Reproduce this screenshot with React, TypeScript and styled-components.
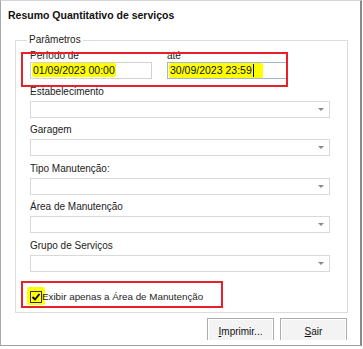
import styled, { createGlobalStyle } from "styled-components";

const GlobalStyle = createGlobalStyle`
  html, body {
    margin: 0;
    padding: 0;
    background: #ffffff;
  }

  body {
    font-family: "Liberation Sans", Arial, sans-serif;
    font-size: 10px;
    color: #1e1e1e;
  }
`;

const filterFields = [
  "Estabelecimento",
  "Garagem",
  "Tipo Manutenção:",
  "Área de Manutenção",
  "Grupo de Serviços",
];

export default function App() {
  return (
    <>
      <GlobalStyle />
      <Window>
        <Title>Resumo Quantitativo de serviços</Title>
        <GroupBox>
          <Legend>Parâmetros</Legend>
          <Marked $top={3.5} $left={-9} $width={267} $height={35}>
            <DateRow>
              <Field $gap={0} $width={122}>
                <Label>Período de</Label>
                <TextBox>
                  <Marker>01/09/2023 00:00</Marker>
                </TextBox>
              </Field>
              <Field $gap={0} $width={120}>
                <Label>até</Label>
                <TextBox $focused>
                  <Marker $extra={8}>
                    30/09/2023 23:59
                    <Caret />
                  </Marker>
                </TextBox>
              </Field>
            </DateRow>
          </Marked>
          <FieldList>
            {filterFields.map((name) => (
              <Field key={name} $gap={3}>
                <Label>{name}</Label>
                <ComboBox>
                  <Arrow />
                </ComboBox>
              </Field>
            ))}
          </FieldList>
          <CheckArea $top={-6} $left={-6} $width={202} $height={27}>
            <CheckRow>
              <CheckMarker>
                <CheckBox>
                  <svg width="10" height="10" viewBox="0 0 10 10">
                    <path
                      d="M1.5 5 L4 7.5 L8.5 2"
                      fill="none"
                      stroke="#000"
                      strokeWidth="1.8"
                    />
                  </svg>
                </CheckBox>
              </CheckMarker>
              <CheckLabel>Exibir apenas a Área de Manutenção</CheckLabel>
            </CheckRow>
          </CheckArea>
        </GroupBox>
        <ButtonBar>
          <Button>
            <u>I</u>mprimir...
          </Button>
          <Button>
            <u>S</u>air
          </Button>
        </ButtonBar>
      </Window>
    </>
  );
}

const Window = styled.div`
  width: 362px;
  height: 346px;
  box-sizing: border-box;
  border-left: 1px solid #a8a8a8;
  border-top: 1px solid #d6d6d6;
  border-right: 2px solid #8a8a8a;
  border-bottom: 1px solid #a0a0a0;
  background: #ffffff;
  overflow: hidden;
`;

const Title = styled.div`
  padding: 8px 0 0 7px;
  line-height: 13px;
  font-size: 10.5px;
  font-weight: bold;
  color: #111;
`;

const GroupBox = styled.fieldset`
  margin: 11px 12px 0 14px;
  padding: 1.5px 17px 7px 14px;
  border: 1px solid #dcdcdc;
  min-width: 0;
`;

const Legend = styled.legend`
  margin-left: -3px;
  padding: 0 2px;
  line-height: 14px;
  color: #222;
`;

const Marked = styled.div<{
  $top: number;
  $left: number;
  $width: number;
  $height: number;
}>`
  position: relative;

  &::after {
    content: "";
    position: absolute;
    top: ${(p) => p.$top}px;
    left: ${(p) => p.$left}px;
    width: ${(p) => p.$width}px;
    height: ${(p) => p.$height}px;
    box-sizing: border-box;
    border: 2px solid #e8202a;
    pointer-events: none;
  }
`;

const DateRow = styled.div`
  display: flex;
  gap: 15px;
`;

const Field = styled.div<{ $gap: number; $width?: number }>`
  display: flex;
  flex-direction: column;
  gap: ${(p) => p.$gap}px;
  width: ${(p) => (p.$width ? `${p.$width}px` : "auto")};
`;

const Label = styled.div`
  line-height: 13px;
  color: #222;
  white-space: nowrap;
`;

const TextBox = styled.div<{ $focused?: boolean }>`
  height: 17px;
  box-sizing: border-box;
  border: 1px solid ${(p) => (p.$focused ? "#9fb6d6" : "#d2d2d2")};
  padding: 0 0 0 1px;
  display: flex;
  align-items: center;
  font-size: 10.5px;
  color: #111;
`;

const Marker = styled.span<{ $extra?: number }>`
  display: inline-flex;
  align-items: center;
  background: #ffff00;
  border-radius: 2px;
  padding: 1px ${(p) => 1 + (p.$extra ?? 0)}px 1px 1px;
  line-height: 12px;
`;

const Caret = styled.span`
  display: inline-block;
  width: 1px;
  height: 13px;
  margin-left: 1px;
  background: #000;
`;

const FieldList = styled.div`
  display: flex;
  flex-direction: column;
  gap: 5.5px;
  margin-top: 6px;
`;

const ComboBox = styled.div`
  height: 17px;
  box-sizing: border-box;
  border: 1px solid #d9d9d9;
  background: #ffffff;
  display: flex;
  align-items: center;
  justify-content: flex-end;
  padding-right: 5px;
`;

const Arrow = styled.span`
  width: 0;
  height: 0;
  border-left: 3px solid transparent;
  border-right: 3px solid transparent;
  border-top: 3px solid #8a8a8a;
`;

const CheckArea = styled(Marked)`
  margin: 15px 0 0 -3px;
`;

const CheckRow = styled.div`
  display: flex;
  align-items: center;
`;

const CheckMarker = styled.span`
  display: flex;
  padding: 4px 3px 2px 3px;
  background: #ffff00;
  border-radius: 2px;
`;

const CheckBox = styled.span`
  width: 12px;
  height: 12px;
  box-sizing: border-box;
  border: 1px solid #333;
  display: flex;
  align-items: center;
  justify-content: center;
`;

const CheckLabel = styled.span`
  margin-left: -3px;
  margin-top: 1px;
  line-height: 13px;
  font-size: 9.8px;
  color: #1e1e1e;
  white-space: nowrap;
`;

const ButtonBar = styled.div`
  display: flex;
  justify-content: flex-end;
  gap: 6px;
  margin-top: 5px;
  padding-right: 13px;
  height: 22px;
  overflow: hidden;
`;

const Button = styled.div`
  flex: none;
  width: 67px;
  height: 26px;
  box-sizing: border-box;
  border: 1px solid #adadad;
  box-shadow: inset 0 0 0 1px #ffffff;
  background: #f3f3f3;
  display: flex;
  align-items: flex-start;
  justify-content: center;
  padding-top: 6px;
  line-height: 13px;
  color: #111;

  u {
    text-underline-offset: 1px;
  }
`;
